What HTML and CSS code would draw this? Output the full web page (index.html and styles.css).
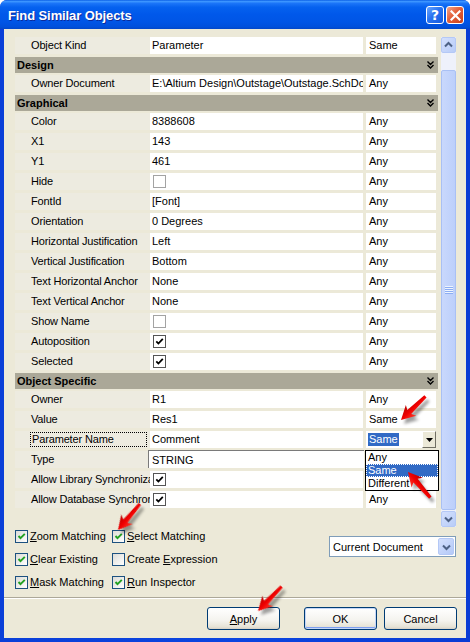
FILE: index.html
```html
<!DOCTYPE html>
<html>
<head>
<meta charset="utf-8">
<link rel="stylesheet" href="styles.css">
</head>
<body>
<div class="window">
  <div class="titlebar">
    <span class="title">Find Similar Objects</span>
    <span class="tb help">?</span>
    <span class="tb close"><svg width="11" height="11" viewBox="0 0 11 11"><path d="M1.5 1.5 L9.5 9.5 M9.5 1.5 L1.5 9.5" stroke="#fff" stroke-width="2.2" stroke-linecap="square"/></svg></span>
  </div>
  <div class="client">
    <div class="gridarea">
      <div class="grid">
        <div class="row"><div class="lbl">Object Kind</div><div class="val">Parameter</div><div class="mt">Same</div></div>
        <div class="hdr"><span>Design</span><svg class="chev" width="7" height="8" viewBox="0 0 7 8"><path d="M0.5 0.5 L3.5 3.5 L6.5 0.5 M0.5 4 L3.5 7 L6.5 4" fill="none" stroke="#000" stroke-width="1.4"/></svg></div>
        <div class="row"><div class="lbl">Owner Document</div><div class="val">E:\Altium Design\Outstage\Outstage.SchDoc</div><div class="mt">Any</div></div>
        <div class="hdr"><span>Graphical</span><svg class="chev" width="7" height="8" viewBox="0 0 7 8"><path d="M0.5 0.5 L3.5 3.5 L6.5 0.5 M0.5 4 L3.5 7 L6.5 4" fill="none" stroke="#000" stroke-width="1.4"/></svg></div>
        <div class="row"><div class="lbl">Color</div><div class="val">8388608</div><div class="mt">Any</div></div>
        <div class="row"><div class="lbl">X1</div><div class="val">143</div><div class="mt">Any</div></div>
        <div class="row"><div class="lbl">Y1</div><div class="val">461</div><div class="mt">Any</div></div>
        <div class="row"><div class="lbl">Hide</div><div class="val"><span class="gchk"></span></div><div class="mt">Any</div></div>
        <div class="row"><div class="lbl">FontId</div><div class="val">[Font]</div><div class="mt">Any</div></div>
        <div class="row"><div class="lbl">Orientation</div><div class="val">0 Degrees</div><div class="mt">Any</div></div>
        <div class="row"><div class="lbl">Horizontal Justification</div><div class="val">Left</div><div class="mt">Any</div></div>
        <div class="row"><div class="lbl">Vertical Justification</div><div class="val">Bottom</div><div class="mt">Any</div></div>
        <div class="row"><div class="lbl">Text Horizontal Anchor</div><div class="val">None</div><div class="mt">Any</div></div>
        <div class="row"><div class="lbl">Text Vertical Anchor</div><div class="val">None</div><div class="mt">Any</div></div>
        <div class="row"><div class="lbl">Show Name</div><div class="val"><span class="gchk"></span></div><div class="mt">Any</div></div>
        <div class="row"><div class="lbl">Autoposition</div><div class="val"><span class="gchk on"><svg width="9" height="9" viewBox="0 0 9 9"><path d="M1.3 4.3 L3.4 6.5 L7.8 1.8" fill="none" stroke="#000" stroke-width="1.8"/></svg></span></div><div class="mt">Any</div></div>
        <div class="row"><div class="lbl">Selected</div><div class="val"><span class="gchk on"><svg width="9" height="9" viewBox="0 0 9 9"><path d="M1.3 4.3 L3.4 6.5 L7.8 1.8" fill="none" stroke="#000" stroke-width="1.8"/></svg></span></div><div class="mt">Any</div></div>
        <div class="hdr"><span>Object Specific</span><svg class="chev" width="7" height="8" viewBox="0 0 7 8"><path d="M0.5 0.5 L3.5 3.5 L6.5 0.5 M0.5 4 L3.5 7 L6.5 4" fill="none" stroke="#000" stroke-width="1.4"/></svg></div>
        <div class="row"><div class="lbl">Owner</div><div class="val">R1</div><div class="mt">Any</div></div>
        <div class="row"><div class="lbl">Value</div><div class="val">Res1</div><div class="mt">Same</div></div>
        <div class="row"><div class="lbl"><span class="focus">Parameter Name</span></div><div class="val">Comment</div><div class="mt combo"><span class="sel">Same</span><span class="dbtn"><svg width="7" height="4" viewBox="0 0 7 4"><path d="M0 0 H7 L3.5 4 Z" fill="#000"/></svg></span></div></div>
        <div class="row"><div class="lbl">Type</div><div class="val edit">STRING</div><div class="mt"></div></div>
        <div class="row"><div class="lbl">Allow Library Synchronization</div><div class="val"><span class="gchk on"><svg width="9" height="9" viewBox="0 0 9 9"><path d="M1.3 4.3 L3.4 6.5 L7.8 1.8" fill="none" stroke="#000" stroke-width="1.8"/></svg></span></div><div class="mt"></div></div>
        <div class="row"><div class="lbl">Allow Database Synchronization</div><div class="val"><span class="gchk on"><svg width="9" height="9" viewBox="0 0 9 9"><path d="M1.3 4.3 L3.4 6.5 L7.8 1.8" fill="none" stroke="#000" stroke-width="1.8"/></svg></span></div><div class="mt">Any</div></div>
      </div>
      <div class="scrollbar">
        <div class="sbtn"><svg width="13" height="14" viewBox="0 0 13 14"><path d="M3 8.5 L6.5 5 L10 8.5" fill="none" stroke="#4d6185" stroke-width="2"/></svg></div>
        <div class="track"></div>
        <div class="thumb"><span class="grip"></span></div>
        <div class="track small"></div>
        <div class="sbtn"><svg width="13" height="14" viewBox="0 0 13 14"><path d="M3 5.5 L6.5 9 L10 5.5" fill="none" stroke="#4d6185" stroke-width="2"/></svg></div>
      </div>
    </div>
    <div class="options">
      <div class="checks">
        <label class="chk"><span class="xbox"><svg width="9" height="9" viewBox="0 0 9 9"><path d="M1.5 4 L3.5 6.2 L7.8 1.8" fill="none" stroke="#21a121" stroke-width="1.9"/></svg></span><span><u>Z</u>oom Matching</span></label>
        <label class="chk"><span class="xbox"><svg width="9" height="9" viewBox="0 0 9 9"><path d="M1.5 4 L3.5 6.2 L7.8 1.8" fill="none" stroke="#21a121" stroke-width="1.9"/></svg></span><span><u>S</u>elect Matching</span></label>
        <label class="chk"><span class="xbox"><svg width="9" height="9" viewBox="0 0 9 9"><path d="M1.5 4 L3.5 6.2 L7.8 1.8" fill="none" stroke="#21a121" stroke-width="1.9"/></svg></span><span><u>C</u>lear Existing</span></label>
        <label class="chk"><span class="xbox"></span><span>Create <u>E</u>xpression</span></label>
        <label class="chk"><span class="xbox"><svg width="9" height="9" viewBox="0 0 9 9"><path d="M1.5 4 L3.5 6.2 L7.8 1.8" fill="none" stroke="#21a121" stroke-width="1.9"/></svg></span><span><u>M</u>ask Matching</span></label>
        <label class="chk"><span class="xbox"><svg width="9" height="9" viewBox="0 0 9 9"><path d="M1.5 4 L3.5 6.2 L7.8 1.8" fill="none" stroke="#21a121" stroke-width="1.9"/></svg></span><span><u>R</u>un Inspector</span></label>
      </div>
      <div class="scope"><span class="scopetext">Current Document</span><span class="xpbtn"><svg width="13" height="14" viewBox="0 0 13 14"><path d="M3 5.5 L6.5 9 L10 5.5" fill="none" stroke="#4d6185" stroke-width="2"/></svg></span></div>
    </div>
    <div class="sep"></div>
    <div class="buttons">
      <span class="btn"><u>A</u>pply</span>
      <span class="btn def">OK</span>
      <span class="btn">Cancel</span>
    </div>
  </div>

  <div class="droplist">
    <div class="item">Any</div>
    <div class="item hl"><span>Same</span></div>
    <div class="item">Different</div>
  </div>

  <svg class="arrows" width="470" height="642" viewBox="0 0 470 642">
    <defs>
      <filter id="blur" x="-50%" y="-50%" width="200%" height="200%"><feGaussianBlur stdDeviation="1.6"/></filter>
      <linearGradient id="red" x1="0" y1="0" x2="0" y2="1">
        <stop offset="0" stop-color="#ff3a2a"/>
        <stop offset="0.5" stop-color="#f00000"/>
        <stop offset="1" stop-color="#b80000"/>
      </linearGradient>
      <polygon id="arr" points="0,0 -14,-7.5 -11.5,-2.8 -34,-1.6 -34,1.6 -11.5,2.8 -14,7.5"/>
    </defs>
    <g fill="#000" opacity="0.38" filter="url(#blur)">
      <use href="#arr" transform="translate(404,424) rotate(136)"/>
      <use href="#arr" transform="translate(411,476) rotate(229)"/>
      <use href="#arr" transform="translate(121,534) rotate(130)"/>
      <use href="#arr" transform="translate(261,615) rotate(134)"/>
    </g>
    <g fill="url(#red)">
      <use href="#arr" transform="translate(401,420) rotate(136)"/>
      <use href="#arr" transform="translate(408,472) rotate(229)"/>
      <use href="#arr" transform="translate(118,530) rotate(130)"/>
      <use href="#arr" transform="translate(258,611) rotate(134)"/>
    </g>
  </svg>
</div>
</body>
</html>
```

FILE: styles.css
```css
* { box-sizing: border-box; }
html, body { margin: 0; padding: 0; }
body {
  width: 470px; height: 642px; overflow: hidden;
  background: #fff;
  font-family: "Liberation Sans", Arial, sans-serif;
  font-size: 11px; color: #000;
}
.window {
  position: relative;
  width: 470px; height: 642px;
  display: flex; flex-direction: column;
  background: linear-gradient(to right, #0a3fd8, #0b45e0 50%, #0a3cd4);
  border-radius: 7px 7px 0 0;
  overflow: hidden;
}
.titlebar {
  height: 29px; flex: none;
  display: flex; align-items: center;
  padding: 1px 6px 0 8px;
  background: linear-gradient(to bottom, #0a5fe6 0%, #3c95ff 5%, #1a74f8 12%, #0561ef 25%, #0058ea 50%, #0055e6 75%, #0050dc 92%, #0347c8 100%);
}
.title {
  flex: 1;
  font-weight: bold; font-size: 13px; color: #fff;
  text-shadow: 1px 1px 0 #0c2a9a;
  letter-spacing: -0.1px;
}
.tb {
  width: 18px; height: 18px;
  border: 1px solid #fff; border-radius: 3px;
  display: flex; align-items: center; justify-content: center;
  color: #fff; font-weight: bold; font-size: 14px;
}
.help {
  margin-right: 2px;
  background: linear-gradient(135deg, #6aa6ff 0%, #2a73f0 45%, #1459e0 100%);
  font-family: "DejaVu Sans", sans-serif;
}
.close {
  background: linear-gradient(135deg, #f3a58a 0%, #e3603a 45%, #c8401a 100%);
}
.client {
  flex: 1;
  margin: 0 4px 4px 4px;
  background: #ece9d8;
  display: flex; flex-direction: column;
}
.gridarea {
  display: flex; gap: 3px;
  margin: 7px 0 0 11px;
  height: 491px;
}
.grid {
  width: 423px; height: 491px; overflow: hidden;
}
.row {
  display: flex;
  height: 20px; padding-top: 1px;
}
.row > div {
  height: 17px; line-height: 17px;
  white-space: nowrap; overflow: hidden;
}
.lbl { width: 135px; padding-left: 16px; background: #edebe0; letter-spacing: -0.15px; }
.val { width: 213px; padding-left: 2px; background: #fff; }
.mt { width: 70px; margin-left: 3px; padding-left: 3px; background: #fff; }
.focus {
  display: inline-block; width: 117px; height: 15px; line-height: 13px;
  margin-left: -1px; padding-left: 1px;
  border: 1px dotted #000;
  vertical-align: top; margin-top: 1px;
}
.val.edit {
  margin-left: -2px; margin-top: -1px; height: 18px; width: 216px;
  padding-left: 3px; line-height: 18px;
  border-top: 1px solid #7a7a7a; border-left: 1px solid #7a7a7a;
}
.combo { position: relative; padding-left: 2px; }
.sel { background: #316ac5; color: #fff; padding: 0 1px; display: inline-block; line-height: 13px; height: 13px; vertical-align: top; margin-top: 2px; }
.dbtn {
  position: absolute; right: 0; top: 0;
  width: 14px; height: 17px;
  background: #ece9d8;
  border: 1px solid; border-color: #fff #716f64 #716f64 #fff;
  display: flex; align-items: center; justify-content: center;
}
.hdr {
  height: 16px; margin: 1px 0;
  background: #aba898;
  display: flex; align-items: center; justify-content: space-between;
  padding: 0 4px 0 2px;
  font-weight: bold;
}
.chev { display: block; }
.gchk {
  display: inline-flex; align-items: center; justify-content: center;
  width: 13px; height: 13px; margin: 2px 0 0 1px;
  border: 1px solid #a3a3a3; background: #fff;
  vertical-align: top;
}
.gchk.on { border-color: #555; }
.gchk svg { display: block; }

.scrollbar {
  width: 15px; height: 490px; margin-top: 1px;
  display: flex; flex-direction: column;
  background: #f0f1f8;
}
.sbtn {
  height: 16px; flex: none;
  background: linear-gradient(135deg, #d4e0fd, #b8ccf8);
  border: 1px solid #b4c8f6; border-radius: 2px;
  display: flex; align-items: center; justify-content: center;
}
.track { height: 17px; flex: none; background: #eef1fb; }
.track.small { height: 1px; }
.thumb {
  height: 440px; flex: none;
  background: linear-gradient(to right, #c9d8fc, #bccffb);
  border: 1px solid #a9c0f4; border-radius: 2px;
  display: flex; align-items: center; justify-content: center;
}
.grip {
  width: 8px; height: 8px;
  background: repeating-linear-gradient(to bottom, #eef4fe 0 1px, #8cadf3 1px 2px);
}

.options {
  display: flex; align-items: flex-start;
  margin-top: 3px; padding-left: 11px;
  height: 59px;
}
.checks {
  display: grid; grid-template-columns: 97px auto;
  row-gap: 10px;
}
.chk {
  display: flex; align-items: center; gap: 2px;
  height: 13px; line-height: 13px; white-space: nowrap;
}
.xbox {
  width: 13px; height: 13px; flex: none;
  border: 1px solid #1c5180;
  background: linear-gradient(135deg, #dcdcd7, #fff);
  display: flex; align-items: center; justify-content: center;
}
.xbox svg { display: block; }
.scope {
  margin: 6px 10px 0 auto;
  width: 127px; height: 21px;
  border: 1px solid #7f9db9; background: #fff;
  display: flex; align-items: center; justify-content: space-between;
  padding: 0 1px 0 3px;
}
.xpbtn {
  width: 16px; height: 17px;
  background: linear-gradient(135deg, #d4e0fd, #b4c9f8);
  border: 1px solid #b4c8f6; border-radius: 2px;
  display: flex; align-items: center; justify-content: center;
}
.sep {
  height: 2px; margin-top: 8px;
  border-top: 1px solid #aca899; border-bottom: 1px solid #fff;
}
.buttons {
  display: flex; justify-content: flex-end;
  margin: 8px 9px 0 0;
}
.btn {
  width: 73px; height: 23px;
  border: 1px solid #003c74; border-radius: 3px;
  background: linear-gradient(to bottom, #ffffff 0%, #f4f3ee 60%, #e6e3d6 90%, #d6d0c5 100%);
  display: flex; align-items: center; justify-content: center;
}
.btn + .btn { margin-left: 7px; }
.btn:first-child { margin-right: 17px; }
.btn.def { box-shadow: inset 0 0 0 1px #c4d6f7, inset 0 -1px 0 1px #7e9ff0; }

.droplist {
  position: absolute; left: 365px; top: 450px;
  width: 74px; height: 41px;
  border: 1px solid #000; background: #fff;
}
.item { height: 13px; line-height: 13px; padding-left: 2px; }
.item.hl {
  background: #316ac5; color: #fff;
  outline: 1px dotted #fff; outline-offset: -1px;
}
.arrows { position: absolute; left: 0; top: 0; pointer-events: none; }
```
